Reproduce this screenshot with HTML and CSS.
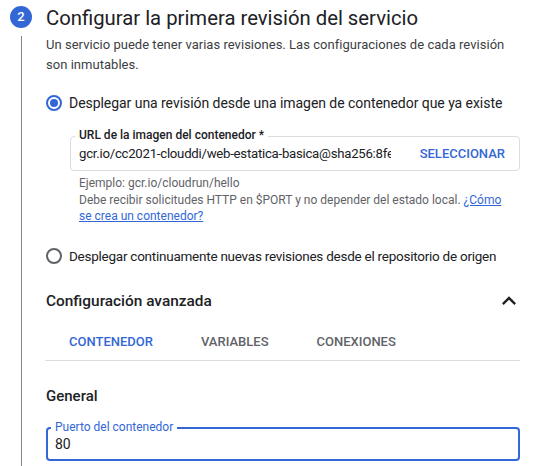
FILE: index.html
```html
<!DOCTYPE html>
<html lang="es">
<head>
<meta charset="utf-8">
<title>Configurar revisión</title>
<link rel="stylesheet" href="styles.css">
</head>
<body>
<div class="step">
  <div class="rail">
    <div class="badge">2</div>
    <div class="rail-line"></div>
  </div>
  <div class="content">
    <h2 class="title">Configurar la primera revisión del servicio</h2>
    <p class="desc">Un servicio puede tener varias revisiones. Las configuraciones de cada revisión son inmutables.</p>

    <div class="radio-row first">
      <span class="radio checked"></span>
      <span class="radio-label">Desplegar una revisión desde una imagen de contenedor que ya existe</span>
    </div>

    <div class="field-block">
      <div class="outlined">
        <span class="float-label">URL de la imagen del contenedor *</span>
        <span class="input-text url">gcr.io/cc2021-clouddi/web-estatica-basica@sha256:8fe5a3c1d</span>
        <span class="text-btn">SELECCIONAR</span>
      </div>
      <div class="hint">
        <div>Ejemplo: gcr.io/cloudrun/hello</div>
        <div>Debe recibir solicitudes HTTP en $PORT y no depender del estado local. <a class="link" href="#">¿Cómo se crea un contenedor?</a></div>
      </div>
    </div>

    <div class="radio-row second">
      <span class="radio"></span>
      <span class="radio-label narrow">Desplegar continuamente nuevas revisiones desde el repositorio de origen</span>
    </div>

    <div class="adv-header">
      <h3 class="adv-title">Configuración avanzada</h3>
      <svg class="chevron" viewBox="0 0 24 24" width="28" height="28" aria-hidden="true"><path d="M12 8l-6 6 1.41 1.41L12 10.83l4.59 4.58L18 14z" fill="#202124"/></svg>
    </div>

    <div class="tabs">
      <span class="tab active">CONTENEDOR</span>
      <span class="tab">VARIABLES</span>
      <span class="tab">CONEXIONES</span>
    </div>

    <h4 class="section">General</h4>

    <div class="outlined focused">
      <span class="float-label blue">Puerto del contenedor</span>
      <span class="input-text">80</span>
    </div>
  </div>
</div>
</body>
</html>
```

FILE: styles.css
```css
* { box-sizing: border-box; }
html, body { margin: 0; padding: 0; background: #fff; }
body {
  font-family: Roboto, "Noto Sans", Arial, sans-serif;
  color: #202124;
  height: 466px;
  overflow: hidden;
}
.step { display: flex; min-height: 466px; }
.rail {
  width: 46px;
  flex: none;
  display: flex;
  flex-direction: column;
  padding-top: 6px;
  padding-left: 10px;
}
.badge {
  width: 22px;
  height: 22px;
  border-radius: 50%;
  background: #3367d6;
  color: #fff;
  font-size: 13px;
  font-weight: 500;
  line-height: 22px;
  text-align: center;
}
.rail-line {
  width: 1px;
  margin-left: 10.5px;
  margin-top: 8px;
  flex: 1;
  background: #80868b;
}
.content {
  flex: 1;
  padding-right: 17px;
  min-width: 0;
}
.title {
  margin: 4px 0 0;
  font-size: 20.3px;
  line-height: 28px;
  font-weight: 400;
  color: #202124;
}
.desc {
  margin: 3px 0 0;
  font-size: 13px;
  letter-spacing: 0.03px;
  line-height: 20px;
  color: #3c4043;
}
.radio-row {
  display: flex;
  align-items: center;
  gap: 7px;
  height: 20px;
  font-size: 14px;
  color: #202124;
  white-space: nowrap;
}
.radio-row.first { margin-top: 18px; }
.radio-row.second { margin-top: 21px; }
.radio-label { letter-spacing: -0.05px; }
.radio-label.narrow { font-size: 13.5px; letter-spacing: -0.25px; }
.radio {
  width: 16px;
  height: 16px;
  border-radius: 50%;
  border: 2px solid #5f6368;
  flex: none;
  position: relative;
}
.radio.checked { border-color: #3367d6; }
.radio.checked::after {
  content: "";
  position: absolute;
  left: 2px;
  top: 2px;
  width: 8px;
  height: 8px;
  border-radius: 50%;
  background: #3367d6;
}
.field-block { margin: 23px 0 0 24px; }
.outlined {
  position: relative;
  display: flex;
  align-items: center;
  height: 35px;
  border: 1px solid #dadce0;
  border-radius: 4px;
  padding: 0 14px 0 8px;
}
.float-label {
  position: absolute;
  top: -9px;
  left: 4px;
  padding: 0 4px;
  background: #fff;
  font-size: 12px;
  line-height: 14px;
  font-weight: 500;
  color: #202124;
}
.float-label.blue { color: #3367d6; font-weight: 400; left: 3px; }
.input-text {
  flex: 1;
  min-width: 0;
  overflow: hidden;
  white-space: nowrap;
  font-size: 14px;
  color: #202124;
}
.input-text.url { font-size: 13.2px; letter-spacing: -0.25px; }
.text-btn {
  flex: none;
  margin-left: 29px;
  font-size: 13px;
  font-weight: 500;
  color: #3367d6;
}
.hint {
  margin-top: 4px;
  padding: 0 16px 0 9px;
  font-size: 12px;
  line-height: 16.5px;
  color: #5f6368;
}
.link { color: #3367d6; text-decoration: underline; }
.adv-header {
  margin-top: 19px;
  height: 32px;
  display: flex;
  align-items: center;
  justify-content: space-between;
}
.adv-title {
  margin: 0;
  font-size: 15.4px;
  font-weight: 500;
  color: #202124;
}
.chevron { margin-right: -3px; }
.tabs {
  margin-top: 6px;
  margin-left: -1px;
  display: flex;
  height: 38px;
  align-items: center;
  border-bottom: 1px solid #dadce0;
}
.tab {
  padding: 0 24px;
  font-size: 13px;
  font-weight: 500;
  color: #5f6368;
}
.tab.active { color: #3367d6; }
.section {
  margin: 25px 0 0;
  font-size: 15px;
  line-height: 20px;
  font-weight: 500;
  color: #202124;
}
.outlined.focused {
  margin-top: 21px;
  height: 34px;
  border: 2px solid #3367d6;
  padding-left: 7px;
}
```
